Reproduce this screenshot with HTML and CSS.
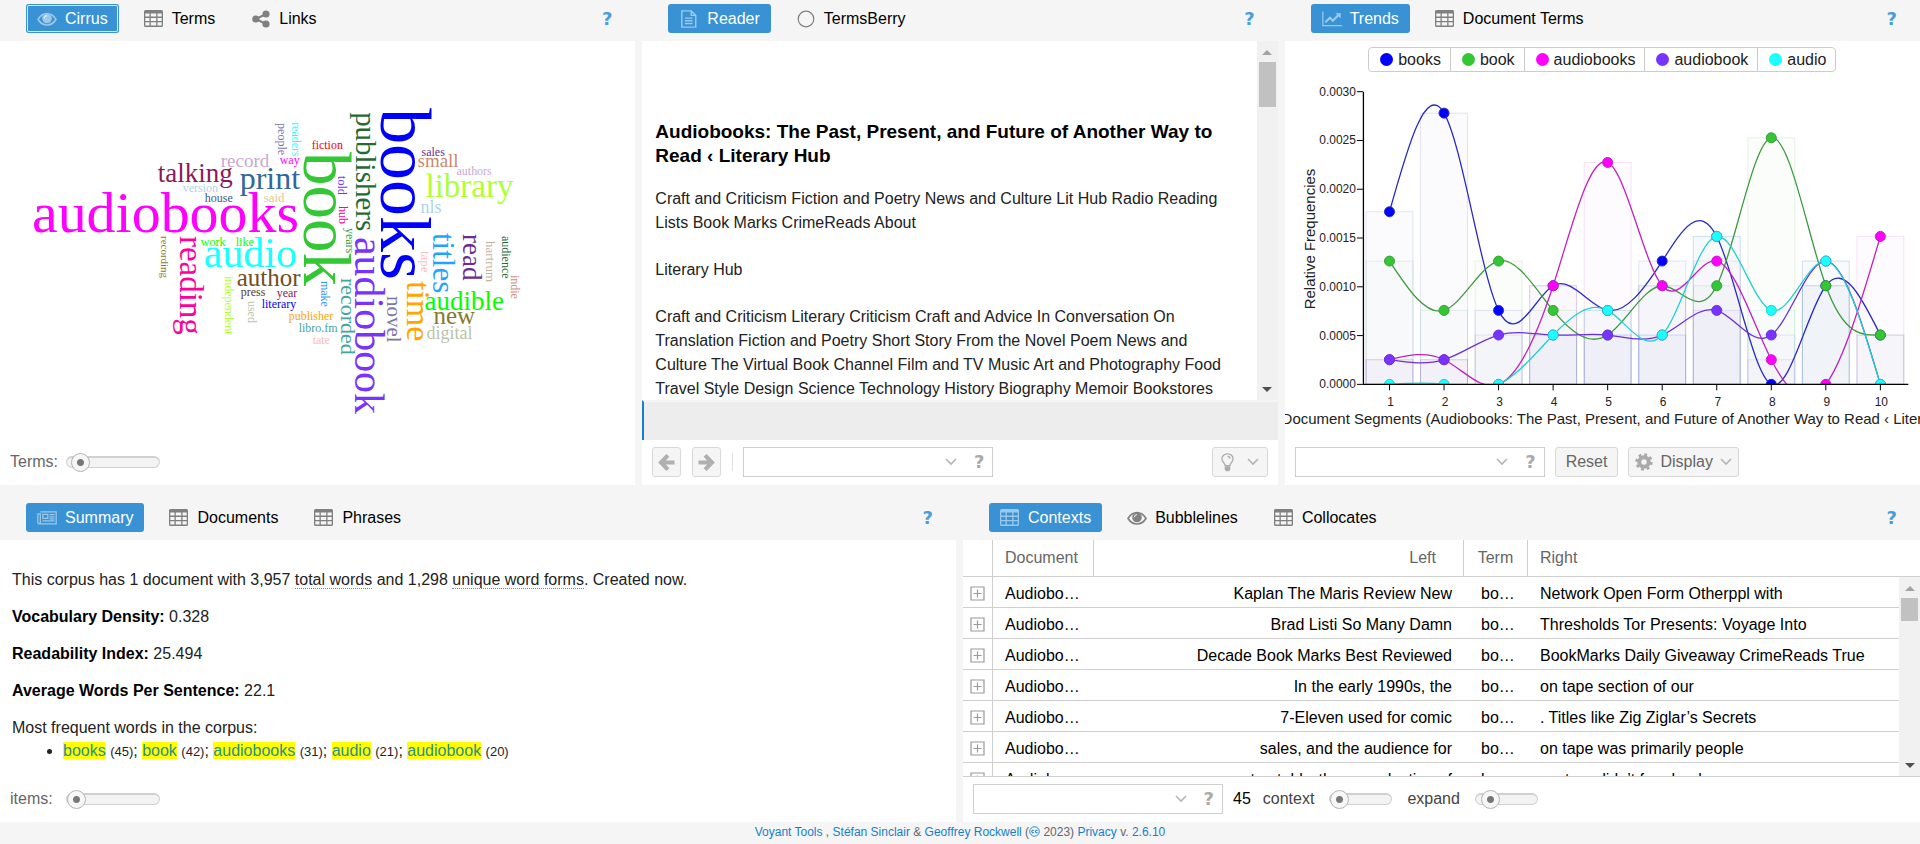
FILE: index.html
```html
<!DOCTYPE html>
<html lang="en">
<head>
<meta charset="utf-8">
<title>Voyant Tools</title>
<link rel="stylesheet" href="styles.css">
</head>
<body>
<svg class="sprite" aria-hidden="true">
  <symbol id="i-table" viewBox="0 0 20 18"><path fill="currentColor" fill-rule="evenodd" d="M1.500 0h16A1.500 1.500 0 0 1 19 1.500v14a1.500 1.500 0 0 1-1.500 1.500h-16A1.500 1.500 0 0 1 0 15.500v-14A1.500 1.500 0 0 1 1.500 0zM1.300 3.500v3h4.200v-3zM6.800 3.500v3h5.400v-3zM13.500 3.500v3h4.200v-3zM1.300 7.900v3h4.200v-3zM6.800 7.900v3h5.400v-3zM13.500 7.900v3h4.200v-3zM1.300 12.300v3.200h4.200v-3.200zM6.800 12.300v3.200h5.400v-3.200zM13.500 12.300v3.200h4.200v-3.200z"/></symbol>
  <symbol id="i-eye" viewBox="0 0 20 18"><path fill="none" stroke="currentColor" stroke-width="1.600" d="M1 9.500Q4.500 3.500 10 3.500T19 9.500Q15.500 15 10 15T1 9.500z"/><circle cx="10" cy="8.500" r="4.800" fill="currentColor"/><path class="glint" d="M7.300 8.300A2.700 2.700 0 0 1 10 5.600" fill="none" stroke-width="1"/></symbol>
  <symbol id="i-share" viewBox="0 0 18 18"><g fill="currentColor"><circle cx="3.800" cy="9" r="3.600"/><circle cx="14" cy="4" r="3.600"/><circle cx="14" cy="14" r="3.600"/></g><path d="M14 4L3.800 9L14 14" fill="none" stroke="currentColor" stroke-width="2.200"/></symbol>
  <symbol id="i-file" viewBox="0 0 18 20"><path fill="none" stroke="currentColor" stroke-width="1.600" d="M1 1h10.500l5 5v13H1zM11.500 1v5h5M4.500 9h8.500M4.500 12h8.500M4.500 15h8.500"/></symbol>
  <symbol id="i-circle" viewBox="0 0 18 18"><circle cx="9" cy="9" r="7.800" fill="none" stroke="currentColor" stroke-width="1.200"/></symbol>
  <symbol id="i-line" viewBox="0 0 24 18"><path fill="none" stroke="currentColor" stroke-width="1.500" d="M1 0v17h23"/><path fill="none" stroke="currentColor" stroke-width="2.600" d="M4 13l5.500-5.500 3.500 3.500 6.500-6.500"/><path fill="currentColor" d="M16 2h6.500v6.500z"/></symbol>
  <symbol id="i-news" viewBox="0 0 24 18"><path fill="none" stroke="currentColor" stroke-width="1.500" d="M4 1.500h19v14.500H2.500A1.700 1.700 0 0 1 1 14.300V4h3v10.500A1.500 1.500 0 0 1 2.500 16M7 4.500h6v5H7zM15 5h6M15 7.500h6M15 10h6M6.500 12.500H21"/></symbol>
  <symbol id="i-gear" viewBox="0 0 18 18"><circle cx="9" cy="9" r="4.700" fill="none" stroke="currentColor" stroke-width="4"/><circle cx="9" cy="9" r="7.400" fill="none" stroke="currentColor" stroke-width="2.600" stroke-dasharray="2.900 2.911"/></symbol>
  <symbol id="i-bulb" viewBox="0 0 14 20"><path fill="none" stroke="currentColor" stroke-width="1.400" d="M4.500 13.500C4.500 11 1 9.500 1 6a6 5.300 0 0 1 12 0c0 3.500-3.500 5-3.500 7.500zM7 3.300q2.600 0 2.800 2.500"/><path fill="currentColor" d="M4 14.300h6v3.200L8.500 19.500h-3L4 17.500z"/></symbol>
  <symbol id="i-left" viewBox="0 0 18 18"><path fill="none" stroke="currentColor" stroke-width="4.400" d="M17.500 9H4M10.500 1.500L3.200 9l7.300 7.500"/></symbol>
  <symbol id="i-right" viewBox="0 0 18 18"><path fill="none" stroke="currentColor" stroke-width="4.400" d="M.500 9h13.500M7.500 1.500L14.800 9 7.500 16.500"/></symbol>
  <symbol id="i-chev" viewBox="0 0 12 8"><path fill="none" stroke="currentColor" stroke-width="1.600" d="M1 1l5 5 5-5"/></symbol>
  <symbol id="i-plus" viewBox="0 0 15 15"><path fill="none" stroke="currentColor" stroke-width="1.200" d="M1 1h13v13H1zM7.500 3.500v8M3.500 7.500h8"/></symbol>
</svg>

<main class="layout">
  <div class="row row-top">
    <section class="panel">
      <header class="bar">
        <nav class="tabs">
          <button class="tab active focused"><svg class="ic"><use href="#i-eye"/></svg>Cirrus</button>
          <button class="tab"><svg class="ic"><use href="#i-table"/></svg>Terms</button>
          <button class="tab"><svg class="ic"><use href="#i-share"/></svg>Links</button>
        </nav>
        <button class="help">?</button>
      </header>
      <div class="body">
        <svg class="cloud" viewBox="0 41 636 399">
          <text x="32" y="232" font-size="58" fill="#ff00ff">audiobooks</text>
          <text x="204" y="267" font-size="42" fill="#1cffff">audio</text>
          <text x="158" y="182" font-size="27" fill="#8b1a5c">talking</text>
          <text x="240" y="189" font-size="32" fill="#33669b">print</text>
          <text x="221" y="167" font-size="19" fill="#c8a8d2">record</text>
          <text x="183" y="192" font-size="12" fill="#b0d3e8">version</text>
          <text x="205" y="202" font-size="12" fill="#3a5a8c">house</text>
          <text x="264" y="202" font-size="13" fill="#e6c888">said</text>
          <text x="280" y="164" font-size="12" fill="#ff00ff">way</text>
          <text x="312" y="149" font-size="12" fill="#ff0000">fiction</text>
          <text x="201" y="246" font-size="12" fill="#00ff00">work</text>
          <text x="236" y="246" font-size="12" fill="#00ff00">like</text>
          <text x="237" y="286" font-size="25" fill="#734e1e">author</text>
          <text x="241" y="296" font-size="12" fill="#5a3c14">press</text>
          <text x="277" y="297" font-size="12" fill="#8b1a5c">year</text>
          <text x="262" y="308" font-size="12" fill="#0000ff">literary</text>
          <text x="289" y="320" font-size="12" fill="#ffa500">publisher</text>
          <text x="299" y="332" font-size="12" fill="#44a59f">libro.fm</text>
          <text x="313" y="344" font-size="12" fill="#ffbcbc">tate</text>
          <text x="422" y="156" font-size="12" fill="#6b2c91">sales</text>
          <text x="418" y="167" font-size="19" fill="#c98a70">small</text>
          <text x="457" y="175" font-size="12" fill="#c8a8d2">authors</text>
          <text x="426" y="197" font-size="33" fill="#aeff39">library</text>
          <text x="421" y="213" font-size="18" fill="#b0d3e8">nls</text>
          <text x="425" y="310" font-size="27" fill="#00ff00">audible</text>
          <text x="434" y="324" font-size="25" fill="#857a2c">new</text>
          <text x="427" y="339" font-size="18" fill="#b9c3ab">digital</text>
          <g class="down">
            <text transform="translate(278 123) rotate(90)" font-size="12" fill="#7a78a8">people</text>
            <text transform="translate(292 122) rotate(90)" font-size="12" fill="#1cffff">readers</text>
            <text transform="translate(304 152) rotate(90)" font-size="67" fill="#33c733">book</text>
            <text transform="translate(381 108) rotate(90)" font-size="72" fill="#0000ff">books</text>
            <text transform="translate(356 112) rotate(90)" font-size="29" fill="#1f6b33">publishers</text>
            <text transform="translate(338 176) rotate(90)" font-size="12" fill="#7933ff">told</text>
            <text transform="translate(339 206) rotate(90)" font-size="12" fill="#ff0099">hub</text>
            <text transform="translate(346 228) rotate(90)" font-size="12" fill="#33a033">years</text>
            <text transform="translate(355 237) rotate(90)" font-size="42" fill="#7933ff">audiobook</text>
            <text transform="translate(341 278) rotate(90)" font-size="22" fill="#44a59f">recorded</text>
            <text transform="translate(321 281) rotate(90)" font-size="12" fill="#1f9cff">make</text>
            <text transform="translate(387 296) rotate(90)" font-size="21" fill="#7a78a8">novel</text>
            <text transform="translate(407 281) rotate(90)" font-size="34" fill="#ffa500">time</text>
            <text transform="translate(433 233) rotate(90)" font-size="31" fill="#1fa5ff">titles</text>
            <text transform="translate(463 234) rotate(90)" font-size="27" fill="#6b2c91">read</text>
            <text transform="translate(421 251) rotate(90)" font-size="13" fill="#ffbcbc">tape</text>
            <text transform="translate(487 241) rotate(90)" font-size="13" fill="#c3b29b">hartrum</text>
            <text transform="translate(503 236) rotate(90)" font-size="12" fill="#1f6b33">audience</text>
            <text transform="translate(512 275) rotate(90)" font-size="12" fill="#d08a80">indie</text>
            <text transform="translate(180 236) rotate(90)" font-size="33" fill="#ff0099">reading</text>
            <text transform="translate(161 236) rotate(90)" font-size="11" fill="#857a2c">recording</text>
            <text transform="translate(225 276) rotate(90)" font-size="12" fill="#aeff39">independent</text>
            <text transform="translate(248 301) rotate(90)" font-size="12" fill="#b9c3ab">used</text>
          </g>
        </svg>
      </div>
      <footer class="tools">
        <label for="terms" class="wide">Terms:</label>
        <input id="terms" class="slider" type="range" value="6">
      </footer>
    </section>

    <section class="panel">
      <header class="bar">
        <nav class="tabs">
          <button class="tab active"><svg class="ic"><use href="#i-file"/></svg>Reader</button>
          <button class="tab"><svg class="ic"><use href="#i-circle"/></svg>TermsBerry</button>
        </nav>
        <button class="help">?</button>
      </header>
      <div class="body reader">
        <div class="reader-main">
          <article class="doc">
            <h1>Audiobooks: The Past, Present, and Future of Another Way to Read ‹ Literary Hub</h1>
            <p>Craft and Criticism Fiction and Poetry News and Culture Lit Hub Radio Reading Lists Book Marks CrimeReads About</p>
            <p>Literary Hub</p>
            <p>Craft and Criticism Literary Criticism Craft and Advice In Conversation On Translation Fiction and Poetry Short Story From the Novel Poem News and Culture The Virtual Book Channel Film and TV Music Art and Photography Food Travel Style Design Science Technology History Biography Memoir Bookstores</p>
          </article>
          <div class="scroll" aria-hidden="true"><i class="up"></i><i class="thumb tall"></i><i class="dn"></i></div>
        </div>
        <div class="strip"></div>
      </div>
      <footer class="tools">
        <button class="btn sq" aria-label="Previous"><svg class="ar"><use href="#i-left"/></svg></button>
        <button class="btn sq" aria-label="Next"><svg class="ar"><use href="#i-right"/></svg></button>
        <span class="sep"></span>
        <div class="combo"><input type="text" aria-label="Search reader"><button aria-label="Open list"><svg class="chev"><use href="#i-chev"/></svg></button><button class="q">?</button></div>
        <button class="btn last" aria-label="Options"><svg class="bulb"><use href="#i-bulb"/></svg><svg class="chev"><use href="#i-chev"/></svg></button>
      </footer>
    </section>

    <section class="panel">
      <header class="bar">
        <nav class="tabs">
          <button class="tab active"><svg class="ic"><use href="#i-line"/></svg>Trends</button>
          <button class="tab"><svg class="ic"><use href="#i-table"/></svg>Document Terms</button>
        </nav>
        <button class="help">?</button>
      </header>
      <div class="body trends">
        <ul class="legend">
          <li><i class="dot books"></i>books</li><li><i class="dot book"></i>book</li><li><i class="dot audiobooks"></i>audiobooks</li><li><i class="dot audiobook"></i>audiobook</li><li><i class="dot audio"></i>audio</li>
        </ul>
        <svg class="chart" id="chart" viewBox="0 72 636 368"></svg>
      </div>
      <footer class="tools">
        <div class="combo"><input type="text" aria-label="Search trends"><button aria-label="Open list"><svg class="chev"><use href="#i-chev"/></svg></button><button class="q">?</button></div>
        <button class="btn reset">Reset</button>
        <button class="btn disp"><svg class="gear"><use href="#i-gear"/></svg>Display<svg class="chev"><use href="#i-chev"/></svg></button>
      </footer>
    </section>
  </div>

  <div class="row row-bottom">
    <section class="panel">
      <header class="bar">
        <nav class="tabs">
          <button class="tab active"><svg class="ic"><use href="#i-news"/></svg>Summary</button>
          <button class="tab"><svg class="ic"><use href="#i-table"/></svg>Documents</button>
          <button class="tab"><svg class="ic"><use href="#i-table"/></svg>Phrases</button>
        </nav>
        <button class="help">?</button>
      </header>
      <div class="body summary">
        <p>This corpus has 1 document with 3,957 <span class="tip">total words</span> and 1,298 <span class="tip">unique word forms</span>. Created now.</p>
        <p><b>Vocabulary Density:</b> 0.328</p>
        <p><b>Readability Index:</b> 25.494</p>
        <p><b>Average Words Per Sentence:</b> 22.1</p>
        <p class="most">Most frequent words in the corpus:</p>
        <ul>
          <li><a href="#books">books</a> <small>(45)</small>; <a href="#book">book</a> <small>(42)</small>; <a href="#audiobooks">audiobooks</a> <small>(31)</small>; <a href="#audio">audio</a> <small>(21)</small>; <a href="#audiobook">audiobook</a> <small>(20)</small></li>
        </ul>
      </div>
      <footer class="tools">
        <label for="items" class="wide">items:</label>
        <input id="items" class="slider" type="range" value="0">
      </footer>
    </section>

    <section class="panel">
      <header class="bar">
        <nav class="tabs">
          <button class="tab active"><svg class="ic"><use href="#i-table"/></svg>Contexts</button>
          <button class="tab"><svg class="ic"><use href="#i-eye"/></svg>Bubblelines</button>
          <button class="tab"><svg class="ic"><use href="#i-table"/></svg>Collocates</button>
        </nav>
        <button class="help">?</button>
      </header>
      <div class="body grid">
        <table>
          <colgroup><col class="c-exp"><col class="c-doc"><col class="c-left"><col class="c-term"><col></colgroup>
          <thead><tr><th></th><th>Document</th><th class="l">Left</th><th class="t">Term</th><th>Right</th></tr></thead>
          <tbody>
            <tr><td><svg class="plus"><use href="#i-plus"/></svg></td><td>Audiobo…</td><td class="l">Kaplan The Maris Review New</td><td class="t">bo…</td><td>Network Open Form Otherppl with</td></tr>
            <tr><td><svg class="plus"><use href="#i-plus"/></svg></td><td>Audiobo…</td><td class="l">Brad Listi So Many Damn</td><td class="t">bo…</td><td>Thresholds Tor Presents: Voyage Into</td></tr>
            <tr><td><svg class="plus"><use href="#i-plus"/></svg></td><td>Audiobo…</td><td class="l">Decade Book Marks Best Reviewed</td><td class="t">bo…</td><td>BookMarks Daily Giveaway CrimeReads True</td></tr>
            <tr><td><svg class="plus"><use href="#i-plus"/></svg></td><td>Audiobo…</td><td class="l">In the early 1990s, the</td><td class="t">bo…</td><td>on tape section of our</td></tr>
            <tr><td><svg class="plus"><use href="#i-plus"/></svg></td><td>Audiobo…</td><td class="l">7-Eleven used for comic</td><td class="t">bo…</td><td>. Titles like Zig Ziglar’s Secrets</td></tr>
            <tr><td><svg class="plus"><use href="#i-plus"/></svg></td><td>Audiobo…</td><td class="l">sales, and the audience for</td><td class="t">bo…</td><td>on tape was primarily people</td></tr>
            <tr><td><svg class="plus"><use href="#i-plus"/></svg></td><td>Audiobo…</td><td class="l">most notably, the reproduction of</td><td class="t">bo…</td><td>cost, or didn’t fear hook</td></tr>
          </tbody>
        </table>
        <div class="scroll over" aria-hidden="true"><i class="up"></i><i class="thumb"></i><i class="dn"></i></div>
      </div>
      <footer class="tools ctx">
        <div class="combo"><input type="text" aria-label="Search contexts"><button aria-label="Open list"><svg class="chev"><use href="#i-chev"/></svg></button><button class="q">?</button></div>
        <span class="count">45</span>
        <label for="context">context</label>
        <input id="context" class="slider short" type="range" value="0">
        <label for="expand">expand</label>
        <input id="expand" class="slider short" type="range" value="11">
      </footer>
    </section>
  </div>
</main>
<footer class="credits"><a href="#voyant">Voyant Tools</a> , <a href="#ss">Stéfan Sinclair</a> &amp; <a href="#gr">Geoffrey Rockwell</a> (<a href="#cc" aria-label="Licence"><svg class="cc" viewBox="0 0 12 12"><circle cx="6" cy="6" r="5.200" fill="none" stroke="currentColor"/><path fill="none" stroke="currentColor" stroke-width="1.100" d="M5.300 4.900a1.400 1.400 0 1 0 0 2.200M9.300 4.900a1.400 1.400 0 1 0 0 2.200"/></svg></a> 2023) <a href="#privacy">Privacy</a> v. <a href="#version">2.6.10</a></footer>
<script src="chart.js"></script>
</body>
</html>
```
FILE: styles.css
```css
* { box-sizing: border-box; }
body { margin: 0; height: 100vh; display: flex; flex-direction: column; background: #f5f5f5; color: #222; font: 16px/24px "Liberation Sans", Arial, sans-serif; overflow: hidden; }
button { font: inherit; color: inherit; background: none; border: 0; padding: 0; margin: 0; }
a { color: #157fcc; text-decoration: none; }
.sprite { position: absolute; width: 0; height: 0; }
.layout { flex: 1; min-height: 0; display: flex; flex-direction: column; gap: 14px; }
.row { display: grid; min-height: 0; gap: 7px; }
.row-top { flex: 485 1 0; grid-template-columns: repeat(3, minmax(0, 1fr)); }
.row-bottom { flex: 323 1 0; grid-template-columns: minmax(0, 956fr) minmax(0, 957fr); }
.panel { display: flex; flex-direction: column; min-width: 0; min-height: 0; background: #fff; }

.bar { display: flex; justify-content: space-between; align-items: center; background: #f5f5f5; padding: 4px 23px 8px 26px; }
.tabs { display: flex; gap: 14px; }
.tab { display: flex; align-items: center; gap: 8px; height: 29px; padding: 0 11px; border-radius: 3px; color: #000; }
.tab.active { background: #3892d4; color: #fff; }
.tab.focused { box-shadow: inset 0 0 0 1px #3892d4, inset 0 0 0 2px #d7e9f6; }
.ic { width: 20px; height: 18px; color: #808080; overflow: visible; }
.glint { stroke: #f5f5f5; }
.active .ic { color: #9cc8ea; }
.help, .combo .q { font: bold 18px/24px "DejaVu Sans", sans-serif; color: #4a9ddb; }

.body { flex: 1; min-height: 0; overflow: hidden; }
.cloud { display: block; width: 100%; height: 100%; font-family: "Palatino Linotype", Palatino, "Liberation Serif", serif; }

.tools { display: flex; align-items: center; height: 45px; padding: 0 10px 1px; color: #666; }
.wide { width: 56px; }
.slider { appearance: none; width: 94px; height: 20px; margin: 0; background: none; }
.slider.short { width: 63px; }
.slider::-webkit-slider-runnable-track { height: 12px; border: 1px solid #d0d0d0; border-top-width: 2px; border-radius: 6px; background: #f3f3f3; }
.slider::-webkit-slider-thumb { appearance: none; width: 19px; height: 19px; margin-top: -5px; border: 1px solid #b4b4b4; border-radius: 50%; background: radial-gradient(circle, #777 0 3px, #f6f6f6 4px); }
.btn { display: flex; align-items: center; justify-content: center; height: 30px; border: 1px solid #d8d8d8; border-radius: 3px; background: #f5f5f5; padding: 0 10px; color: #666; }
.btn.sq { width: 29px; padding: 0; margin-right: 11px; }
.btn.last { width: 56px; margin-left: auto; gap: 13px; padding: 0; }
.btn.reset { margin: 0 10px; }
.btn.disp { padding: 0 6px; gap: 7px; }
.ar { width: 17px; height: 17px; color: #b0b0b0; }
.bulb { width: 13px; height: 19px; color: #aaa; }
.gear { width: 18px; height: 18px; color: #aaa; }
.chev { width: 12px; height: 8px; color: #b5b5b5; }
.sep { width: 1px; height: 18px; background: #e0e0e0; margin: 0 10px 0 0; }
.combo { display: flex; align-items: center; width: 250px; height: 30px; border: 1px solid #cfcfcf; background: #fff; padding-right: 8px; gap: 17px; }
.combo input { flex: 1; min-width: 0; border: 0; outline: 0; background: none; font: inherit; }
.combo button { display: flex; align-items: center; }
.combo .q { color: #aaa; }

.reader { display: flex; flex-direction: column; }
.reader-main { flex: 1; min-height: 0; display: flex; overflow: hidden; }
.doc { flex: 1; min-width: 0; padding: 79px 32px 0 13px; color: #222; }
.doc h1 { margin: 0 0 19px; font-size: 19px; line-height: 24px; color: #000; }
.doc p { margin: 0 0 23px; }
.strip { height: 40px; background: #ededed; border-top: 2px solid #f5f5f5; border-left: 2px solid #157fcc; }
.scroll { display: flex; flex-direction: column; width: 21px; background: #f1f1f1; padding: 9px 2px 8px; align-items: center; }
.scroll .up { border: 5px solid transparent; border-top: 0; border-bottom-color: #a3a3a3; }
.scroll .dn { border: 5px solid transparent; border-bottom: 0; border-top-color: #505050; margin-top: auto; }
.scroll .thumb { width: 17px; height: 23px; margin-top: 7px; background: #c1c1c1; }
.scroll .thumb.tall { height: 45px; }

.trends { display: flex; flex-direction: column; align-items: center; }
.legend { display: flex; list-style: none; margin: 6px 0 0; padding: 0; border: 1px solid #ccc; border-radius: 4px; }
.legend li { display: flex; align-items: center; gap: 5px; height: 23px; padding: 0 9px 0 11px; }
.legend li + li { border-left: 1px solid #ccc; }
.dot { width: 13px; height: 13px; border-radius: 50%; }
.dot.books { background: #0000ff; }
.dot.book { background: #33c733; }
.dot.audiobooks { background: #ff00ff; }
.dot.audiobook { background: #7933ff; }
.dot.audio { background: #1cffff; }
.chart { flex: 1; min-height: 0; width: 100%; font-size: 12px; fill: #222; }
.chart .title { font-size: 15px; }

.summary { padding: 28px 12px 0; }
.summary p { margin: 0 0 13px; }
.summary b { color: #000; }
.summary .most { margin: 0 0 2px; }
.summary ul { margin: 0; padding-left: 51px; line-height: 18px; }
.summary li a { background: #ff0; color: #2b8f8f; }
.summary small { font-size: 13px; }
.tip { border-bottom: 1px dotted #7777ee; }

.grid { position: relative; border-bottom: 1px solid #cfcfcf; }
table { width: 100%; table-layout: fixed; border-spacing: 0; line-height: 20px; }
.c-exp { width: 30px; }
.c-doc { width: 101px; }
.c-left { width: 370px; }
.c-term { width: 64px; }
th { height: 37px; font-weight: normal; color: #666; text-align: left; padding: 0 12px; border-bottom: 1px solid #cfcfcf; border-right: 1px solid #cfcfcf; }
th:last-child { border-right: 0; }
td { height: 31px; color: #000; padding: 4px 12px 0; border-bottom: 1px solid #cfcfcf; white-space: nowrap; }
td:first-child { padding: 2px 0 0 7px; border-right: 1px solid #cfcfcf; }
.plus { display: block; width: 15px; height: 15px; color: #999; }
th.l { text-align: right; padding-right: 27px; }
td.l { text-align: right; }
th.t { text-align: center; padding: 0; }
td.t { padding-left: 17px; padding-right: 0; }
.scroll.over { position: absolute; top: 37px; right: 0; bottom: 0; }
.count { color: #000; margin: 0 12px 0 10px; }
.ctx label { color: #444; margin-right: 15px; }
.ctx .slider { margin-right: 15px; }

.credits { height: 22px; text-align: center; font-size: 12px; line-height: 21px; color: #666; }
.cc { width: 11px; height: 11px; vertical-align: -1px; }
```
FILE: chart.js
```javascript
const series = [
  { line: "#2a2ac8", dot: "#0000ff", counts: [7, 11, 3, 4, 3, 5, 6, 0, 4, 2] },
  { line: "#3c9a3c", dot: "#33c733", counts: [5, 3, 5, 3, 2, 4, 4, 10, 4, 2] },
  { line: "#c020c0", dot: "#ff00ff", counts: [1, 1, 0, 4, 9, 4, 5, 1, 0, 6] },
  { line: "#6a30e0", dot: "#7933ff", counts: [1, 1, 2, 2, 2, 2, 3, 2, 5, 0] },
  { line: "#20d0d0", dot: "#1cffff", counts: [0, 0, 0, 2, 3, 2, 6, 3, 5, 0] }
];
const TOTAL = 3957, LEFT = 78, RIGHT = 624, BASE = 384.5, TOP = 91.5, MAX = 0.003;
const x = i => 104.6 + i * 54.6;
const y = v => BASE - v / MAX * (BASE - TOP);

// Control points of a natural cubic spline through the given values
function controls(p) {
  const n = p.length - 1, a = [], b = [], r = [];
  a[0] = 0; b[0] = 2; r[0] = p[0] + 2 * p[1];
  for (let i = 1; i < n - 1; i++) { a[i] = 1; b[i] = 4; r[i] = 4 * p[i] + 2 * p[i + 1]; }
  a[n - 1] = 2; b[n - 1] = 7; r[n - 1] = 8 * p[n - 1] + p[n];
  for (let i = 1; i < n; i++) { const m = a[i] / b[i - 1]; b[i] -= m; r[i] -= m * r[i - 1]; }
  const c1 = [], c2 = [];
  c1[n - 1] = r[n - 1] / b[n - 1];
  for (let i = n - 2; i >= 0; i--) c1[i] = (r[i] - c1[i + 1]) / b[i];
  c2[n - 1] = (p[n] + c1[n - 1]) / 2;
  for (let i = 0; i < n - 1; i++) c2[i] = 2 * p[i + 1] - c1[i + 1];
  return [c1, c2];
}

let bars = "", lines = "", dots = "", axes = "";
for (const s of series) {
  const ys = s.counts.map(c => y(c / TOTAL));
  const [c1, c2] = controls(ys);
  let d = `M${x(0)} ${ys[0]}`;
  ys.forEach((v, i) => {
    bars += `<rect x="${x(i) - 23.5}" y="${v}" width="47" height="${BASE - v}" fill="${s.line}" fill-opacity=".018" stroke="${s.line}" stroke-opacity=".12"/>`;
    dots += `<circle cx="${x(i)}" cy="${v}" r="5" fill="${s.dot}" stroke="${s.line}"/>`;
    if (i) d += `C${x(i - 1) + 18.2} ${c1[i - 1]} ${x(i) - 18.2} ${c2[i - 1]} ${x(i)} ${v}`;
  });
  lines += `<path d="${d}" fill="none" stroke="${s.line}" stroke-width="1.3"/>`;
}
for (let i = 0; i <= 6; i++) {
  const v = i * 0.0005;
  axes += `<path d="M${LEFT - 6} ${y(v)}h6" stroke="#000"/><text x="${LEFT - 7}" y="${y(v) + 4}" text-anchor="end">${v.toFixed(4)}</text>`;
}
for (let i = 0; i < 10; i++) {
  axes += `<path d="M${x(i)} ${BASE}v6" stroke="#000"/><text x="${x(i) + 1}" y="406" text-anchor="middle">${i + 1}</text>`;
}
axes += `<path d="M${LEFT}.500 ${TOP}V${BASE}H${RIGHT}" fill="none" stroke="#000" stroke-width="1.3"/>`;
axes += `<text class="title" transform="translate(30 239) rotate(-90)" text-anchor="middle">Relative Frequencies</text>`;
axes += `<text class="title" x="346" y="424" text-anchor="middle">Document Segments (Audiobooks: The Past, Present, and Future of Another Way to Read ‹ Literary Hub)</text>`;
document.getElementById("chart").innerHTML =
  `<clipPath id="plot"><rect x="${LEFT}" y="72" width="558" height="${BASE - 72}"/></clipPath><g clip-path="url(#plot)">${bars}${lines}${dots}</g>${axes}`;
```
